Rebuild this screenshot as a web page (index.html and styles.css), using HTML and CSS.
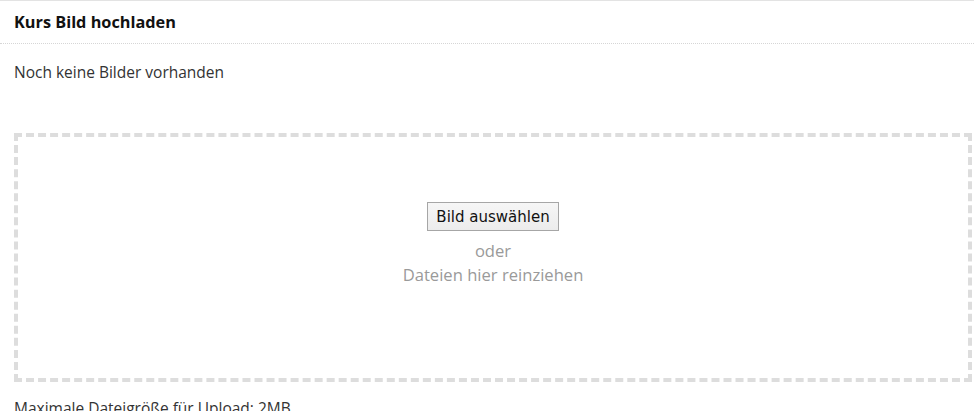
FILE: index.html
```html
<!DOCTYPE html>
<html lang="de">
<head>
    <meta charset="UTF-8">
    <meta name="viewport" content="width=device-width, initial-scale=1.0">
    <title>Kurs Bild hochladen</title>
    <link rel="stylesheet" href="styles.css">
</head>
<body>
    <div class="panel">
        <div class="panel-header">
            <h3>Kurs Bild hochladen</h3>
        </div>

        <div class="panel-body">
            <p class="empty-note">Noch keine Bilder vorhanden</p>

            <!-- Upload drop zone -->
            <div class="dropzone">
                <button type="button" class="pick-btn">Bild auswählen</button>
                <span class="hint">oder</span>
                <span class="hint">Dateien hier reinziehen</span>
            </div>

            <p class="size-note">Maximale Dateigröße für Upload: 2MB</p>
        </div>
    </div>
</body>
</html>
```

FILE: styles.css
```css
body {
    margin: 0;
    font-family: "Open Sans", Arial, sans-serif;
    color: #333;
    background: #fff;
}
.panel {
    border-top: 1px solid #e3e3e3;
}
.panel-header {
    height: 42px;
    padding: 0 14px;
    display: flex;
    align-items: center;
    border-bottom: 1px dotted #d6d6d6;
}
.panel-header h3 {
    margin: 0;
    font-size: 16.3px;
    font-weight: 700;
    color: #111;
}
.panel-body {
    padding: 18px 2px 0 14px;
}
.empty-note {
    margin: 0;
    font-size: 15.5px;
    line-height: 20px;
}
.dropzone {
    margin-top: 51px;
    height: 176px;
    padding: 65px 0 0;
    border: 4px dashed #ddd;
    display: flex;
    flex-direction: column;
    align-items: center;
}
.pick-btn {
    height: 29px;
    padding: 0 8px;
    font-family: "DejaVu Sans", sans-serif;
    font-size: 15px;
    color: #111;
    background: linear-gradient(#f6f6f6, #ececec);
    border: 1px solid #a6a6a6;
    border-radius: 0;
    margin-bottom: 8px;
}
.hint {
    font-size: 16.6px;
    line-height: 24px;
    color: #9a9a9a;
}
.size-note {
    margin: 16px 0 0;
    font-size: 15.5px;
    line-height: 20px;
}
```
